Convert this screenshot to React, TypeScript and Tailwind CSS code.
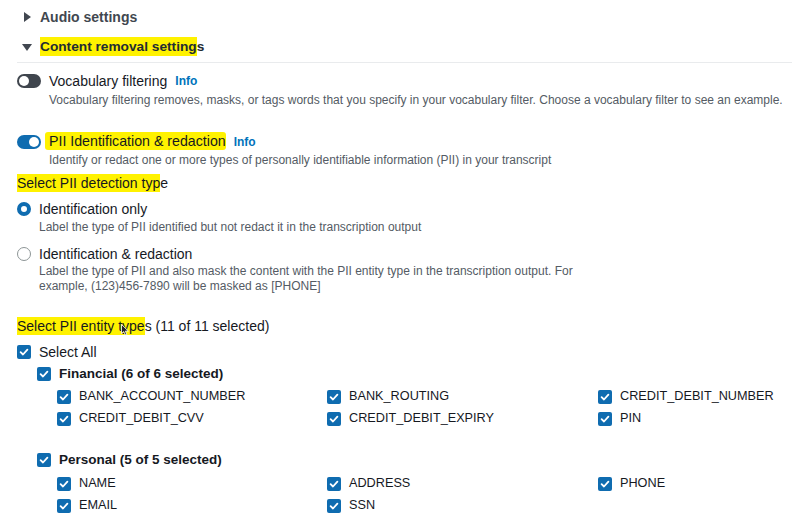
import { ReactNode } from "react";

const font = { fontFamily: '"Liberation Sans", Arial, sans-serif' };

function Check({ className = "" }: { className?: string }) {
    return (
        <span className={"inline-flex w-[14px] h-[14px] rounded-[2px] bg-[#0f6cb0] items-center justify-center shrink-0 " + className}>
            <svg width="10" height="10" viewBox="0 0 10 10">
                <path d="M1.6 5.2 L4 7.5 L8.4 2.6" fill="none" stroke="white" strokeWidth="1.8" strokeLinecap="round" strokeLinejoin="round" />
            </svg>
        </span>
    );
}

function Toggle({ on }: { on: boolean }) {
    return (
        <span className={"relative inline-block w-[24px] h-[14px] rounded-full shrink-0 " + (on ? "bg-[#0f6cb0]" : "bg-[#3f454d]")}>
            <span className={"absolute top-[2px] w-[10px] h-[10px] rounded-full bg-white " + (on ? "right-[2px]" : "left-[2px]")}></span>
        </span>
    );
}

function Item({ label }: { label: string }) {
    return (
        <div className="flex items-center h-[22px] gap-[8px]">
            <Check />
            <span className="text-[12.7px] text-[#16191f]">{label}</span>
        </div>
    );
}

function Mark({ children, className = "" }: { children: ReactNode; className?: string }) {
    return <span className={"bg-[#fff200] " + className}>{children}</span>;
}

export default function App() {
    const financial = ["BANK_ACCOUNT_NUMBER", "BANK_ROUTING", "CREDIT_DEBIT_NUMBER", "CREDIT_DEBIT_CVV", "CREDIT_DEBIT_EXPIRY", "PIN"];
    const personal = ["NAME", "ADDRESS", "PHONE", "EMAIL", "SSN"];

    return (
        <div style={font} className="relative w-[792px] h-[518px] overflow-hidden bg-white text-[#16191f] pt-[6px]">
            {/* expandable headers */}
            <div className="flex items-center h-[22px] pl-[24px] gap-[9px]">
                <svg width="7" height="10" viewBox="0 0 7 10"><path d="M0 0 L7 5 L0 10 Z" fill="#414750" /></svg>
                <span className="text-[14px] font-bold text-[#414750]">Audio settings</span>
            </div>
            <div className="flex items-center h-[22px] mt-[8px] pl-[22px] gap-[8px]">
                <svg width="10" height="7" viewBox="0 0 10 7"><path d="M0 0 L10 0 L5 7 Z" fill="#414750" /></svg>
                <span className="text-[13.7px] font-bold text-[#232b33]"><Mark className="py-[2px]">Content removal setting</Mark>s</span>
            </div>
            <div className="mt-[4px] ml-[17px] border-t border-[#e9ebed]"></div>

            <div className="pl-[17px]">
                {/* vocabulary filtering */}
                <div className="flex items-center h-[20px] mt-[8px] gap-[8px]">
                    <Toggle on={false} />
                    <span className="text-[14px]">Vocabulary filtering</span>
                    <span className="text-[12px] font-bold text-[#0073bb]">Info</span>
                </div>
                <div className="h-[16px] mt-[1px] pl-[32px] text-[12px] leading-[16px] text-[#545b64]">
                    Vocabulary filtering removes, masks, or tags words that you specify in your vocabulary filter. Choose a vocabulary filter to see an example.
                </div>

                {/* PII */}
                <div className="flex items-center h-[20px] mt-[24px] gap-[8px]">
                    <Toggle on={true} />
                    <span className="text-[14.2px]"><Mark className="pl-[4px] -ml-[4px] py-[1px] rounded-[3px]">PII Identification &amp; redaction</Mark></span>
                    <span className="text-[12px] font-bold text-[#0073bb]">Info</span>
                </div>
                <div className="h-[16px] pl-[32px] text-[12px] leading-[16px] text-[#545b64]">
                    Identify or redact one or more types of personally identifiable information (PII) in your transcript
                </div>

                <div className="flex items-center h-[20px] mt-[5px] text-[14px]">
                    <span><Mark className="py-[1px]">Select PII detection typ</Mark>e</span>
                </div>

                <div className="flex items-center h-[20px] mt-[6px] gap-[8px]">
                    <span className="w-[14px] h-[14px] rounded-full border-[4px] border-[#0f6cb0] bg-white shrink-0"></span>
                    <span className="text-[14px]">Identification only</span>
                </div>
                <div className="h-[16px] pl-[22px] text-[12px] leading-[16px] text-[#545b64]">
                    Label the type of PII identified but not redact it in the transcription output
                </div>

                <div className="flex items-center h-[20px] mt-[9px] gap-[8px]">
                    <span className="w-[14px] h-[14px] rounded-full border border-[#8d9596] bg-white shrink-0"></span>
                    <span className="text-[14px]">Identification &amp; redaction</span>
                </div>
                <div className="pl-[22px] pr-[170px] text-[12px] leading-[15px] text-[#545b64]">
                    Label the type of PII and also mask the content with the PII entity type in the transcription output. For example, (123)456-7890 will be masked as [PHONE]
                </div>

                {/* entity types */}
                <div className="flex items-center h-[20px] mt-[22px] text-[14px]">
                    <span><Mark className="py-[1px]">Select PII entity type</Mark>s (11 of 11 selected)</span>
                </div>
                <div className="flex items-center h-[20px] mt-[6px] gap-[8px]">
                    <Check />
                    <span className="text-[14px]">Select All</span>
                </div>

                <div className="pl-[20px]">
                    <div className="flex items-center h-[20px] mt-[2px] gap-[8px]">
                        <Check />
                        <span className="text-[13.5px] font-bold">Financial (6 of 6 selected)</span>
                    </div>
                    <div className="grid grid-cols-[270px_271px_1fr] pl-[20px] mt-[2px]">
                        {financial.map((f) => <Item key={f} label={f} />)}
                    </div>

                    <div className="flex items-center h-[20px] mt-[20px] gap-[8px]">
                        <Check />
                        <span className="text-[13.5px] font-bold">Personal (5 of 5 selected)</span>
                    </div>
                    <div className="grid grid-cols-[270px_271px_1fr] pl-[20px] mt-[3px]">
                        {personal.map((p) => <Item key={p} label={p} />)}
                    </div>
                </div>
            </div>

            {/* mouse pointer */}
            <svg className="absolute left-[121px] top-[324px]" width="8" height="12" viewBox="0 0 8 12">
                <path d="M0.5 0.5 L0.5 9.5 L2.8 7.6 L4.4 11 L5.8 10.4 L4.3 7.1 L7.3 7.1 Z" fill="#222" stroke="white" strokeWidth="0.8" />
            </svg>
        </div>
    );
}
